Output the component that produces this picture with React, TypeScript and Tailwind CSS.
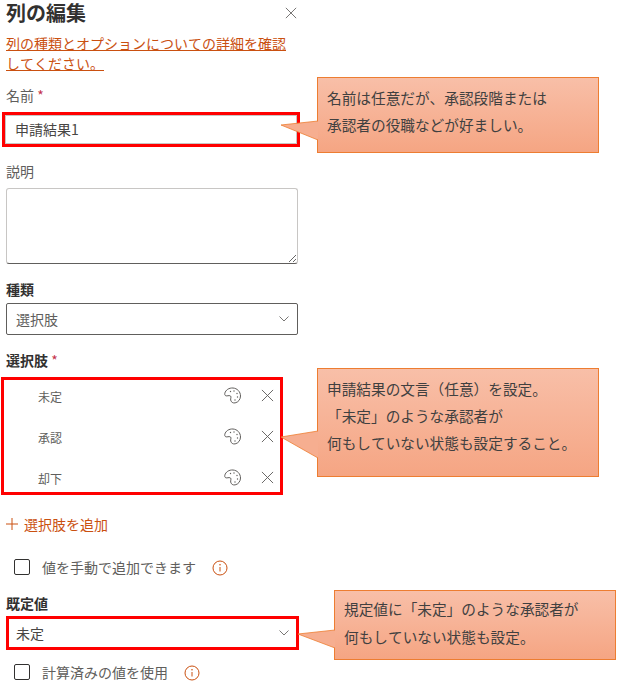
import { ReactNode } from 'react'

function CloseIcon({ className }: { className: string }) {
    return (
        <svg className={className} viewBox="0 0 14 14" fill="none" stroke="currentColor" strokeWidth="1">
            <path d="M1 1l12 12M13 1L1 13" />
        </svg>
    )
}

function PaletteIcon() {
    return (
        <svg className="h-[17px] w-[17px] text-[#605e5c]" viewBox="0 0 17 17" fill="none" stroke="currentColor">
            <path
                strokeWidth="1"
                d="M9 1C5 .7 1.6 3 .8 6.3c-.4 1.6 .6 2.8 2 2.6 1.600-.2 3-.6 3.800 .2 .9 .9 -.2 2.300 .1 4 .3 2 2.300 3.200 4.400 2.800 3.200-.6 5.400-3.600 5.400-6.900C16.500 4.700 13.200 1.300 9 1z"
            />
            <circle cx="6.500" cy="4.500" r=".7" fill="currentColor" stroke="none" />
            <circle cx="10" cy="4" r=".7" fill="currentColor" stroke="none" />
            <circle cx="13" cy="6.500" r=".7" fill="currentColor" stroke="none" />
            <circle cx="13.500" cy="10" r=".7" fill="currentColor" stroke="none" />
            <circle cx="11" cy="13" r=".7" fill="currentColor" stroke="none" />
        </svg>
    )
}

function Chevron() {
    return (
        <svg className="h-[6px] w-[10px] text-[#797775]" viewBox="0 0 10 6" fill="none" stroke="currentColor" strokeWidth="1">
            <path d="M.5 .5l4.500 4.500 4.500-4.500" />
        </svg>
    )
}

function InfoIcon() {
    return (
        <svg className="h-[16px] w-[16px] text-[#ca5010]" viewBox="0 0 16 16" fill="none" stroke="currentColor" strokeWidth="1">
            <circle cx="8" cy="8" r="7" />
            <path d="M8 7v4.500" />
            <circle cx="8" cy="4.800" r=".8" fill="currentColor" stroke="none" />
        </svg>
    )
}

function CheckRow({ label, className }: { label: string; className: string }) {
    return (
        <div className={`flex items-center ${className}`}>
            <span className="ml-[8px] h-[16px] w-[16px] rounded-[2px] border border-[#323130]" />
            <span className="ml-[12px] text-[14px] leading-[20px] text-[#605e5c]">{label}</span>
            <span className="ml-[16px] mt-[2px]">
                <InfoIcon />
            </span>
        </div>
    )
}

function Option({ label }: { label: string }) {
    return (
        <div className="flex h-[41px] shrink-0 items-center first:-mt-[5px]">
            <span className="ml-[34px] mt-[3px] text-[12px] text-[#605e5c]">{label}</span>
            <span className="ml-auto">
                <PaletteIcon />
            </span>
            <CloseIcon className="ml-[20px] mr-[6px] h-[13px] w-[13px] text-[#605e5c]" />
        </div>
    )
}

function Callout({ className, tail, children }: { className: string; tail: string; children: ReactNode }) {
    return (
        <div className={`absolute border border-[#ed7d31] bg-gradient-to-b from-[#f8bfa8] to-[#f5a583] text-[14.67px] text-[#404040] ${className}`}>
            {children}
            <svg className="absolute -left-[38px] -top-[1px] h-[110px] w-[40px]" viewBox="0 0 40 110" fill="none">
                <polygon points={tail} fill="#f6ae90" />
                <polyline points={tail} stroke="#ed7d31" strokeWidth="0.8" />
            </svg>
        </div>
    )
}

export default function App() {
    return (
        <div className="relative h-[686px] w-[631px] overflow-hidden bg-white font-['Noto_Sans_CJK_JP','Noto_Sans',sans-serif] [font-kerning:none]">
            <div className="flex w-[302px] flex-col pl-[6px]">
                <div className="flex h-[26px] items-center justify-between">
                    <h1 className="text-[20px] font-bold leading-[26px] text-[#323130]">列の編集</h1>
                    <CloseIcon className="mr-[5px] h-[12px] w-[12px] text-[#605e5c]" />
                </div>
                <a className="mt-[7px] block w-[285px] text-[14px] leading-[20px] text-[#ca5010] underline">
                    列の種類とオプションについての詳細を確認してください。
                </a>
                <label className="mt-[12px] text-[14px] leading-[20px] text-[#605e5c]">
                    名前 <span className="text-[#c4314b]">*</span>
                </label>
                <div className="-ml-[4px] mt-[7px] h-[35px] w-[298px] border-[3px] border-[#ff0000] pl-[10px] text-[14px] leading-[29px] text-[#484644] shadow-[inset_0_0_0_1px_#c8c6c4]">
                    申請結果1
                </div>
                <label className="mt-[14px] text-[14px] leading-[20px] text-[#605e5c]">説明</label>
                <textarea className="mt-[7px] h-[76px] w-[292px] rounded-[3px] border border-[#c8c6c4] border-b-[#605e5c] bg-white" />
                <label className="mt-[15px] text-[14px] font-bold leading-[20px] text-[#323130]">種類</label>
                <div className="mt-[4px] flex h-[32px] w-[292px] items-center justify-between rounded-[2px] border border-[#605e5c] pl-[9px] pr-[8px] text-[14px] text-[#605e5c]">
                    選択肢
                    <Chevron />
                </div>
                <label className="mt-[15px] text-[14px] font-bold leading-[20px] text-[#323130]">
                    選択肢 <span className="font-normal text-[#c4314b]">*</span>
                </label>
                <div className="-ml-[5px] mt-[7px] flex h-[118px] w-[282px] flex-col border-[3px] border-[#ff0000]">
                    <Option label="未定" />
                    <Option label="承認" />
                    <Option label="却下" />
                </div>
                <div className="mt-[19px] flex h-[20px] items-center text-[14px] text-[#ca5010]">
                    <svg className="h-[12px] w-[12px]" viewBox="0 0 12 12" fill="none" stroke="currentColor" strokeWidth="1">
                        <path d="M6 0v12M0 6h12" />
                    </svg>
                    <span className="ml-[6px]">選択肢を追加</span>
                </div>
                <CheckRow label="値を手動で追加できます" className="mt-[23px] h-[20px]" />
                <label className="mt-[16px] text-[14px] font-bold leading-[20px] text-[#323130]">既定値</label>
                <div className="mt-[3px] flex h-[34px] w-[293px] items-center justify-between border-[3px] border-[#ff0000] pl-[7px] pr-[7px] text-[14px] text-[#484644]">
                    未定
                    <Chevron />
                </div>
                <CheckRow label="計算済みの値を使用" className="mt-[12px] h-[20px]" />
            </div>

            <Callout className="left-[317px] top-[77px] h-[76px] w-[282px] pl-[9px] pt-[6px] leading-[27px]" tail="38,44 1,48 38,63">
                <p>名前は任意だが、承認段階または</p>
                <p>承認者の役職などが好ましい。</p>
            </Callout>
            <Callout className="left-[317px] top-[368px] h-[109px] w-[282px] pl-[9px] pt-[6px] leading-[27px]" tail="38,63 1,69 38,90">
                <p>申請結果の文言（任意）を設定。</p>
                <p>「未定」のような承認者が</p>
                <p>何もしていない状態も設定すること。</p>
            </Callout>
            <Callout className="left-[334px] top-[590px] h-[70px] w-[282px] pl-[9px] pt-[4px] leading-[28px]" tail="38,40 1,44 38,58">
                <p>規定値に「未定」のような承認者が</p>
                <p>何もしていない状態も設定。</p>
            </Callout>
        </div>
    )
}
